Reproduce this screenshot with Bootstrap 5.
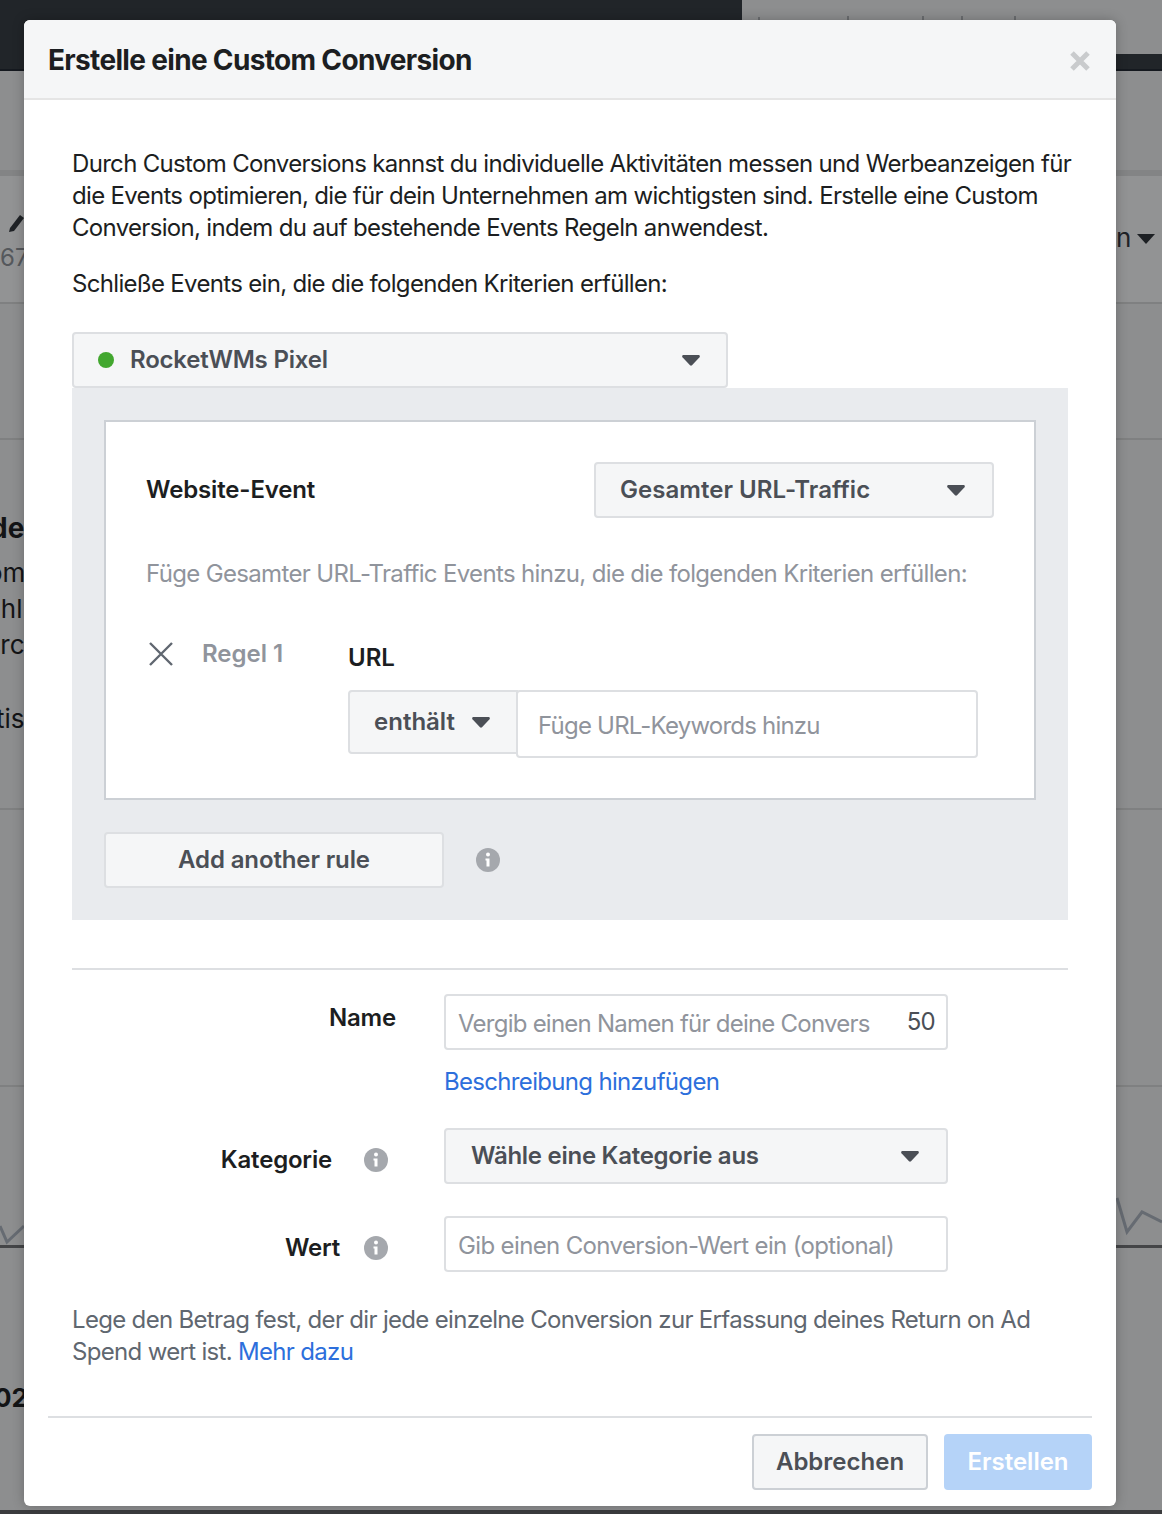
<!DOCTYPE html>
<html lang="de">
<head>
<meta charset="utf-8">
<title>Erstelle eine Custom Conversion</title>
<link href="https://cdn.jsdelivr.net/npm/bootstrap@5.3.0/dist/css/bootstrap.min.css" rel="stylesheet">
<style>
html,body{height:100%}
body{font-family:Inter,"Liberation Sans",sans-serif;background:#8d8e8f;color:#1c1e21;font-size:24px;line-height:32px;overflow:hidden}
.stage{position:relative;width:1162px;height:1514px;padding:20px 46px 8px 24px;overflow:hidden}
.bg-piece{position:absolute}
.bg-dark{background:#1f2730}
.bg-band{background:#929394}
.bg-rule{background:#7f8081;height:2px;left:0;right:0}
.bg-word{position:absolute;font-weight:400;color:#131416;font-size:26px;line-height:32px;white-space:nowrap}
.fb-modal{position:relative;z-index:2;width:1092px;height:1486px;border:0;border-radius:6px;background:#fff;box-shadow:0 0 12px rgba(0,0,0,.25);overflow:hidden;display:flex;flex-direction:column}
.fb-head{height:80px;background:#f5f6f7;border-bottom:2px solid #e5e5e5;padding:0 24px;display:flex;align-items:center;justify-content:space-between}
.fb-title{font-size:28px;line-height:32px;padding-top:2px;font-weight:700;margin:0;color:#1c1e21;letter-spacing:-.67px}
.fb-close{background:none;border:0;padding:0;width:24px;height:24px;display:flex;margin-top:4px}
.fb-body{padding:48px 48px 0 48px;flex:1;letter-spacing:-.68px}
.fb-body button,.rule-name,.rule-url{letter-spacing:0}
.ev-label{letter-spacing:-.14px}
.form-lab{letter-spacing:-.2px}
.fb-intro{margin:0 0 24px;width:1010px}
.fb-sel{background:#f5f6f7;border:2px solid #dddfe2;border-radius:4px;color:#4b4f56;font-weight:600;font-size:24px;line-height:32px;display:flex;align-items:center;justify-content:space-between;padding:0;text-align:left}
.fb-sel:hover,.fb-sel:focus,.fb-sel:active{background:#f5f6f7;border-color:#dddfe2;color:#4b4f56}
.fb-body .sel-pixel{width:656px;height:56px;padding:0 26px 0 24px;margin-top:32px;letter-spacing:-.2px}
.px-dot{width:16px;height:16px;border-radius:50%;background:#42a72f;margin-right:16px;flex:none}
.caret-svg{width:18px;height:11px;flex:none;display:block}
.rule-zone{background:#e9ebee;padding:32px;height:532px;width:996px}
.rule-box{background:#fff;border:2px solid #ccd0d5;height:380px;padding:40px 40px 0 40px;width:932px}
.ev-row{display:flex;align-items:center;justify-content:space-between;height:56px}
.ev-label{font-weight:600;color:#1c1e21}
.fb-body .sel-event{width:400px;height:56px;padding:0 27px 0 24px;letter-spacing:.04px}
.ev-hint{color:#90949c;margin:40px 0 0;line-height:32px;white-space:nowrap;letter-spacing:-.66px}
.rule-row{display:flex;margin-top:32px}
.rule-x{width:28px;height:28px;margin:18px 0 0 1px;flex:none;display:block}
.rule-name{color:#90949c;font-weight:600;margin:16px 0 0 27px;width:146px;flex:none}
.rule-url{font-weight:600;color:#1c1e21;line-height:32px;margin-top:20px;margin-bottom:16px}
.url-row{display:flex;align-items:flex-start}
.sel-enth{width:170px;height:64px;padding:0 26px 0 24px;border-radius:4px 0 0 4px}
.url-input{width:462px;height:68px;margin-left:-2px;border:2px solid #dddfe2;border-radius:4px;font-size:24px;padding:2px 20px 0;color:#1c1e21;box-shadow:none;letter-spacing:-.79px}
.url-input::placeholder,.fb-input::placeholder{color:#90949c;opacity:1}
.add-row{display:flex;align-items:center;margin-top:32px}
.add-btn{width:340px;height:56px;background:#f5f6f7;border:2px solid #dddfe2;border-radius:4px;color:#4b4f56;font-weight:600;font-size:24px;line-height:32px;padding:0}
.fb-body .add-btn{letter-spacing:-.13px}
.add-btn:hover{background:#f5f6f7;border-color:#dddfe2;color:#4b4f56}
.info-svg{width:24px;height:24px;flex:none;display:block}
.add-row .info-svg{margin-left:32px}
.fb-sep{height:2px;background:#dddfe2;margin:48px 0 24px;width:996px;opacity:1;border:0}
.form-line{display:flex;align-items:flex-start}
.form-lab{width:372px;display:flex;justify-content:flex-end;align-items:center;font-weight:600;color:#1c1e21;flex:none}
.lab-name{padding:8px 48px 0 0}
.lab-cat{height:56px;padding:8px 56px 0 0}
.lab-cat .info-svg{margin-left:32px}
.lab-val{height:56px;padding:8px 56px 0 0}
.lab-val .info-svg{margin-left:24px}
.form-ctl{width:504px}
.fb-input{width:504px;height:56px;border:2px solid #dddfe2;border-radius:4px;font-size:24px;line-height:32px;padding:2px 12px 0;box-shadow:none;color:#1c1e21;letter-spacing:-.64px}
.name-wrap{position:relative}
.name-cnt{position:absolute;right:13px;top:12px;color:#4b4f56;font-size:24px;line-height:32px}
.name-input{padding-right:56px;letter-spacing:-.76px}
.desc-link{color:#2d6fdc;text-decoration:none;display:block;margin-top:16px;line-height:32px}
.fb-body .sel-cat{width:504px;height:56px;padding:0 27px 0 25px;letter-spacing:-.27px}
.gap-cat{margin-top:30px}
.gap-val{margin-top:32px}
.fb-note{color:#606770;margin:32px 0 0;width:1000px}
.fb-note a{color:#2d6fdc;text-decoration:none}
.fb-foot{margin:0 24px;border-top:2px solid #dddfe2;height:90px;padding-top:16px;display:flex;justify-content:flex-end;gap:16px}
.btn-cancel{width:176px;height:56px;background:#f5f6f7;border:2px solid #ccd0d5;border-radius:4px;color:#4b4f56;font-weight:600;font-size:24px;padding:0}
.btn-create,.btn-create:disabled{width:148px;height:56px;background:#b5d3f8;border:0;border-radius:4px;color:#fff;font-weight:600;font-size:24px;padding:0;opacity:1}
</style>
</head>
<body>
<div class="stage">
  <div class="bg-piece bg-dark" style="left:0;top:0;width:742px;height:70px"></div>
  <div class="bg-piece bg-dark" style="left:1116px;top:54px;width:46px;height:16px"></div>
  <div class="bg-piece bg-rule" style="top:69px;background:#15191f"></div>
  <div class="bg-piece bg-rule" style="top:170px;height:6px;background:#838485"></div>
  <div class="bg-piece bg-band" style="left:0;right:0;top:176px;height:126px"></div>
  <div class="bg-piece bg-rule" style="top:302px"></div>
  <div class="bg-piece bg-rule" style="top:438px"></div>
  <div class="bg-piece bg-rule" style="top:808px"></div>
  <div class="bg-piece bg-rule" style="top:1085px"></div>
  <div class="bg-piece bg-rule" style="top:1245px;height:3px;background:#444547"></div>
  <div class="bg-piece bg-rule" style="top:1510px;height:4px;background:#3b3c3e"></div>
  <svg class="bg-piece" style="left:756px;top:16px" width="270" height="4" viewBox="0 0 270 4" aria-hidden="true"><path d="M3 1v3M92 0v4M167 0v4M206 0v4M259 0v4" stroke="#6b6d70" stroke-width="2"/></svg>
  <div class="bg-word" style="left:0;top:242px;color:#55585c;font-size:24px">67</div>
  <div class="bg-word" style="left:-10px;top:512px;font-weight:700;font-size:28px">de</div>
  <div class="bg-word" style="left:-13px;top:557px">om</div>
  <div class="bg-word" style="left:-14px;top:593px">chl</div>
  <div class="bg-word" style="left:-15px;top:629px">urc</div>
  <div class="bg-word" style="left:-4px;top:703px">tise</div>
  <div class="bg-word" style="left:-6px;top:1382px;font-weight:700">02</div>
  <div class="bg-word" style="left:1116px;top:222px;color:#1f2226">n</div>
  <svg class="bg-piece" style="left:1136px;top:233px" width="20" height="12" viewBox="0 0 20 12" aria-hidden="true"><path d="M1 1h18l-9 10z" fill="#1d2024"/></svg>
  <svg class="bg-piece" style="left:8px;top:212px" width="16" height="24" viewBox="0 0 16 24" aria-hidden="true"><path d="M1 20l1-4L12 3l4 3-10 13z" fill="#1f2226"/></svg>
  <svg class="bg-piece" style="left:1116px;top:1190px" width="46" height="50" viewBox="0 0 46 50" aria-hidden="true"><path d="M1 8l10 34 15-20 20 10" fill="none" stroke="#666b72" stroke-width="3"/></svg>
  <svg class="bg-piece" style="left:0;top:1220px" width="24" height="26" viewBox="0 0 24 26" aria-hidden="true"><path d="M0 6l7 16L24 6" fill="none" stroke="#666b72" stroke-width="3"/></svg>

  <div class="modal-content fb-modal">
    <div class="modal-header fb-head">
      <h5 class="modal-title fb-title">Erstelle eine Custom Conversion</h5>
      <button type="button" class="fb-close" aria-label="Schließen">
        <svg width="24" height="24" viewBox="0 0 24 24" aria-hidden="true"><path d="M4 4l16 16M20 4L4 20" stroke="#c9cbcd" stroke-width="5" fill="none"/></svg>
      </button>
    </div>
    <div class="modal-body fb-body">
      <p class="fb-intro">Durch Custom Conversions kannst du individuelle Aktivitäten messen und Werbeanzeigen für die Events optimieren, die für dein Unternehmen am wichtigsten sind. Erstelle eine Custom Conversion, indem du auf bestehende Events Regeln anwendest.</p>
      <p class="m-0">Schließe Events ein, die die folgenden Kriterien erfüllen:</p>
      <button type="button" class="btn fb-sel sel-pixel">
        <span class="d-flex align-items-center"><span class="px-dot"></span>RocketWMs Pixel</span>
        <svg class="caret-svg" viewBox="0 0 18 11" aria-hidden="true"><path d="M1.5 0h15c1.2 0 1.8 1.3 1 2.2L10 10.2c-.6.6-1.4.6-2 0L.5 2.2C-.3 1.3.3 0 1.5 0z" fill="#4b4f56"/></svg>
      </button>
      <div class="rule-zone">
        <div class="rule-box">
          <div class="ev-row">
            <span class="ev-label">Website-Event</span>
            <button type="button" class="btn fb-sel sel-event">Gesamter URL-Traffic
              <svg class="caret-svg" viewBox="0 0 18 11" aria-hidden="true"><path d="M1.5 0h15c1.2 0 1.8 1.3 1 2.2L10 10.2c-.6.6-1.4.6-2 0L.5 2.2C-.3 1.3.3 0 1.5 0z" fill="#4b4f56"/></svg>
            </button>
          </div>
          <p class="ev-hint">Füge Gesamter URL-Traffic Events hinzu, die die folgenden Kriterien erfüllen:</p>
          <div class="rule-row">
            <svg class="rule-x" viewBox="0 0 28 28" aria-hidden="true"><path d="M3 3l22 22M25 3L3 25" stroke="#606770" stroke-width="2.4" fill="none"/></svg>
            <div class="rule-name">Regel 1</div>
            <div>
              <div class="rule-url">URL</div>
              <div class="url-row">
                <button type="button" class="btn fb-sel sel-enth">enthält
                  <svg class="caret-svg" viewBox="0 0 18 11" aria-hidden="true"><path d="M1.5 0h15c1.2 0 1.8 1.3 1 2.2L10 10.2c-.6.6-1.4.6-2 0L.5 2.2C-.3 1.3.3 0 1.5 0z" fill="#4b4f56"/></svg>
                </button>
                <input class="form-control url-input" type="text" placeholder="Füge URL-Keywords hinzu">
              </div>
            </div>
          </div>
        </div>
        <div class="add-row">
          <button type="button" class="btn add-btn">Add another rule</button>
          <svg class="info-svg" viewBox="0 0 24 24" aria-hidden="true"><circle cx="12" cy="12" r="12" fill="#a5a8ad"/><circle cx="12" cy="6.5" r="2" fill="#fff"/><path d="M9.5 10.5h4v8h-3v-6h-1z" fill="#fff"/></svg>
        </div>
      </div>
      <hr class="fb-sep">
      <div class="form-line">
        <div class="form-lab lab-name">Name</div>
        <div class="form-ctl">
          <div class="name-wrap">
            <input class="form-control fb-input name-input" type="text" placeholder="Vergib einen Namen für deine Convers">
            <span class="name-cnt">50</span>
          </div>
          <a class="desc-link" href="#">Beschreibung hinzufügen</a>
        </div>
      </div>
      <div class="form-line gap-cat">
        <div class="form-lab lab-cat">Kategorie<svg class="info-svg" viewBox="0 0 24 24" aria-hidden="true"><circle cx="12" cy="12" r="12" fill="#a5a8ad"/><circle cx="12" cy="6.5" r="2" fill="#fff"/><path d="M9.5 10.5h4v8h-3v-6h-1z" fill="#fff"/></svg></div>
        <button type="button" class="btn fb-sel sel-cat">Wähle eine Kategorie aus
          <svg class="caret-svg" viewBox="0 0 18 11" aria-hidden="true"><path d="M1.5 0h15c1.2 0 1.8 1.3 1 2.2L10 10.2c-.6.6-1.4.6-2 0L.5 2.2C-.3 1.3.3 0 1.5 0z" fill="#4b4f56"/></svg>
        </button>
      </div>
      <div class="form-line gap-val">
        <div class="form-lab lab-val">Wert<svg class="info-svg" viewBox="0 0 24 24" aria-hidden="true"><circle cx="12" cy="12" r="12" fill="#a5a8ad"/><circle cx="12" cy="6.5" r="2" fill="#fff"/><path d="M9.5 10.5h4v8h-3v-6h-1z" fill="#fff"/></svg></div>
        <input class="form-control fb-input" type="text" placeholder="Gib einen Conversion-Wert ein (optional)">
      </div>
      <p class="fb-note">Lege den Betrag fest, der dir jede einzelne Conversion zur Erfassung deines Return on Ad Spend wert ist. <a href="#">Mehr dazu</a></p>
    </div>
    <div class="fb-foot">
      <button type="button" class="btn btn-cancel">Abbrechen</button>
      <button type="button" class="btn btn-create" disabled>Erstellen</button>
    </div>
  </div>
</div>
<script src="https://cdn.jsdelivr.net/npm/bootstrap@5.3.0/dist/js/bootstrap.bundle.min.js"></script>
</body>
</html>
